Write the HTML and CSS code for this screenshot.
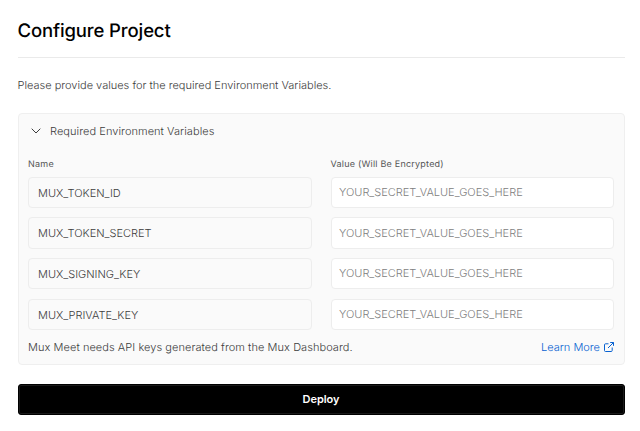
FILE: index.html
```html
<!DOCTYPE html>
<html lang="en">
<head>
<meta charset="utf-8">
<title>Configure Project</title>
<link rel="stylesheet" href="styles.css">
</head>
<body>
<main class="page">
  <h1 class="title">Configure Project</h1>
  <p class="intro">Please provide values for the required Environment Variables.</p>
  <section class="card">
    <div class="card-head">
      <svg class="chevron" viewBox="0 0 10 6" fill="none" stroke="currentColor"><path d="M.7.7 5 5 9.3.7"/></svg>
      <span>Required Environment Variables</span>
    </div>
    <div class="grid">
      <div class="label">Name</div>
      <div class="label">Value (Will Be Encrypted)</div>
      <div class="field">MUX_TOKEN_ID</div>
      <input class="field value" placeholder="YOUR_SECRET_VALUE_GOES_HERE">
      <div class="field">MUX_TOKEN_SECRET</div>
      <input class="field value" placeholder="YOUR_SECRET_VALUE_GOES_HERE">
      <div class="field">MUX_SIGNING_KEY</div>
      <input class="field value" placeholder="YOUR_SECRET_VALUE_GOES_HERE">
      <div class="field">MUX_PRIVATE_KEY</div>
      <input class="field value" placeholder="YOUR_SECRET_VALUE_GOES_HERE">
    </div>
    <div class="card-foot">
      <span>Mux Meet needs API keys generated from the Mux Dashboard.</span>
      <a class="link">Learn More
        <svg class="external" viewBox="0 0 10 10" fill="none" stroke="currentColor"><path d="M8.2 5.5v3a1 1 0 0 1-1 1H1.5a1 1 0 0 1-1-1V2.8a1 1 0 0 1 1-1h3M6.2.5h3.3v3.3M9.5.5 4 6"/></svg>
      </a>
    </div>
  </section>
  <button class="deploy">Deploy</button>
</main>
</body>
</html>
```

FILE: styles.css
```css
* {
  box-sizing: border-box;
}

body {
  margin: 0;
  background: #fff;
  color: #3c3c3c;
  font: 300 11px/16px Inter, "Liberation Sans", sans-serif;
  letter-spacing: 0.06px;
  text-rendering: geometricPrecision;
}

.page {
  padding: 18px 15.5px 0 17.5px;
}

.title {
  margin: 0;
  height: 40px;
  padding-top: 1px;
  border-bottom: 1px solid #eaeaea;
  color: #000;
  font-size: 18.5px;
  font-weight: 550;
  line-height: 25px;
  letter-spacing: -0.12px;
}

.intro {
  margin: 19px 0 20px;
  letter-spacing: 0;
}

.card {
  height: 252px;
  padding: 9px 9.5px 0 9.5px;
  border: 1px solid #efefef;
  border-radius: 4px;
  background: #fafafa;
}

.card-head {
  display: flex;
  align-items: center;
  gap: 9px;
  padding-left: 3px;
}

.chevron {
  width: 10px;
  height: 6px;
}

.grid {
  display: grid;
  grid-template-columns: 1fr 1fr;
  column-gap: 19px;
  row-gap: 9.4px;
  margin-top: 18.4px;
}

.label {
  height: 10px;
  color: #555;
  font-size: 9px;
  font-weight: 400;
  line-height: 16.4px;
  letter-spacing: 0.22px;
}

.field {
  width: 100%;
  height: 31.3px;
  padding: 0 9px;
  border: 1px solid #ededed;
  border-radius: 4px;
  background: #fafafa;
  color: #3c3c3c;
  font: 300 11px/30px Inter, "Liberation Sans", sans-serif;
  letter-spacing: 0;
  text-rendering: geometricPrecision;
}

.value {
  padding: 0 7.5px 1px;
  background: #fff;
}

.value::placeholder {
  color: #808080;
}

.card-foot {
  display: flex;
  justify-content: space-between;
  margin-top: 9.1px;
}

.link {
  display: flex;
  align-items: center;
  gap: 4px;
  color: #0761d1;
  letter-spacing: 0;
}

.external {
  width: 10px;
  height: 10px;
}

.deploy {
  display: block;
  width: 100%;
  height: 31px;
  margin-top: 19px;
  padding: 0;
  border: 1px solid #000;
  border-radius: 3px;
  background: #000;
  box-shadow: inset 0 0 0 1px #1a1a1a;
  color: #fff;
  font: 600 11px/29px Inter, "Liberation Sans", sans-serif;
  letter-spacing: -0.05px;
}
```
